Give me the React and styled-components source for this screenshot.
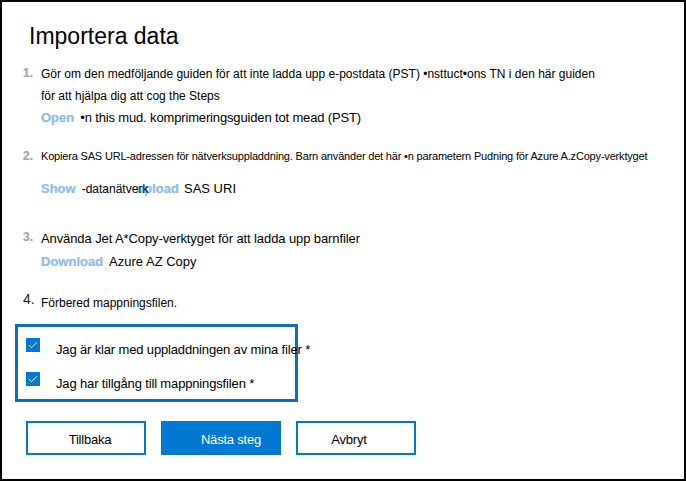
import React from "react";
import styled, { createGlobalStyle } from "styled-components";

const Global = createGlobalStyle`
  html, body { margin: 0; padding: 0; background: #fff; }
  body { font-family: "Liberation Sans", Arial, sans-serif; color: #111; }
`;

const Card = styled.div`
  box-sizing: border-box;
  width: 686px;
  height: 481px;
  border: 2px solid #000;
  padding: 20px 0 0 21px;
  background: #fff;
  overflow: hidden;
`;

const Title = styled.h1`
  margin: 0 0 0 6px;
  font-size: 23px;
  line-height: 28px;
  font-weight: 400;
  color: #000;
`;

const Step = styled.div`
  display: grid;
  grid-template-columns: 18px 1fr;
  margin-top: ${(p) => p.$mt}px;
`;

const Num = styled.span`
  font-size: ${(p) => (p.$dark ? 14 : 12)}px;
  line-height: 22px;
  font-weight: ${(p) => (p.$dark ? 400 : 700)};
  color: ${(p) => (p.$dark ? "#222" : "#a8a8a8")};
  text-shadow: ${(p) => (p.$dark ? "none" : "0 0 1px #c8c8c8")};
  margin-top: ${(p) => p.$up || 0}px;
`;

const Body = styled.div`
  display: flex;
  flex-direction: column;
`;

const Line = styled.div`
  font-size: ${(p) => p.$size || 12}px;
  line-height: ${(p) => p.$lh || 22}px;
  letter-spacing: ${(p) => p.$ls || 0}px;
  margin-top: ${(p) => p.$mt || 0}px;
  white-space: nowrap;
  color: #000;
`;

const Link = styled.span`
  color: #93bde6;
  font-weight: 700;
  font-size: 13px;
  letter-spacing: 0;
  text-shadow: 0 0 1px #b9d4ee;
  margin-right: ${(p) => p.$mr ?? 6}px;
  margin-left: ${(p) => p.$ml || 0}px;
`;

const Small = styled.span`
  font-size: ${(p) => p.$size}px;
  letter-spacing: ${(p) => p.$ls || 0}px;
  position: relative;
  z-index: 1;
`;

const CheckBox = styled.fieldset`
  box-sizing: border-box;
  margin: 10px 0 0 -8px;
  width: 283px;
  height: 78px;
  border: 3px solid #106ebe;
  padding: 11px 0 0 8px;
  display: flex;
  flex-direction: column;
  gap: 14px;
  min-width: 0;
`;

const CheckRow = styled.label`
  display: flex;
  align-items: flex-start;
  gap: 16px;
  height: 20px;
  white-space: nowrap;
`;

const Box = styled.span`
  flex: none;
  width: 14px;
  height: 14px;
  background: #0078d4;
  display: flex;
  align-items: center;
  justify-content: center;
`;

const Label = styled.span`
  font-size: 13px;
  letter-spacing: -0.15px;
  line-height: 20px;
  margin-top: 2px;
  color: #000;
  position: relative;
`;

const Buttons = styled.div`
  display: flex;
  gap: 15px;
  margin: 19px 0 0 3px;
`;

const Button = styled.button`
  box-sizing: border-box;
  width: 120px;
  height: 34px;
  border: ${(p) => (p.$primary ? "none" : "2px solid #0078d4")};
  background: ${(p) => (p.$primary ? "#0078d4" : "#fff")};
  color: ${(p) => (p.$primary ? "#fff" : "#000")};
  font-family: "Liberation Sans", Arial, sans-serif;
  font-size: 13px;
  letter-spacing: -0.2px;
  padding: 3px ${(p) => Math.max(-(p.$shift || 0), 0)}px 0
    ${(p) => Math.max(p.$shift || 0, 0)}px;
  text-align: center;
  cursor: pointer;
`;

const Check = () => (
  <svg width="10" height="8" viewBox="0 0 10 8">
    <path d="M1 4.2 L3.6 6.6 L9 1.2" fill="none" stroke="#fff" strokeWidth="0.9" />
  </svg>
);

export default function App() {
  return (
    <>
      <Global />
      <Card>
        <Title>Importera data</Title>

        <Step $mt={13}>
          <Num $up={-1}>1.</Num>
          <Body>
            <Line $size={12}>
              Gör om den medföljande guiden för att inte ladda upp e-postdata (PST) •nsttuct•ons TN i den här guiden
            </Line>
            <Line $size={12}>för att hjälpa dig att cog the Steps</Line>
            <Line $size={13} $ls={-0.15}>
              <Link>Open</Link>•n this mud. komprimeringsguiden tot mead (PST)
            </Line>
          </Body>
        </Step>

        <Step $mt={16}>
          <Num>2.</Num>
          <Body>
            <Line $size={11} $ls={-0.18}>
              Kopiera SAS URL-adressen för nätverksuppladdning. Barn använder det här •n parametern Pudning för Azure A.zCopy-verktyget
            </Line>
            <Line $size={13} $mt={11}>
              <Link>Show</Link>
              <Small $size={12}>-datanätverk</Small>
              <Link $ml={-12} $mr={5}>upload</Link>
              SAS URI
            </Line>
          </Body>
        </Step>

        <Step $mt={26}>
          <Num>3.</Num>
          <Body>
            <Line $size={13} $lh={25} $ls={-0.1}>
              Använda Jet A*Copy-verktyget för att ladda upp barnfiler
            </Line>
            <Line $size={13}>
              <Link>Download</Link>Azure AZ Copy
            </Line>
          </Body>
        </Step>

        <Step $mt={19}>
          <Num $dark $up={-4}>4.</Num>
          <Body>
            <Line $size={12}>Förbered mappningsfilen.</Line>
          </Body>
        </Step>

        <CheckBox>
          <CheckRow>
            <Box><Check /></Box>
            <Label>Jag är klar med uppladdningen av mina filer *</Label>
          </CheckRow>
          <CheckRow>
            <Box><Check /></Box>
            <Label>Jag har tillgång till mappningsfilen *</Label>
          </CheckRow>
        </CheckBox>

        <Buttons>
          <Button $shift={8}>Tillbaka</Button>
          <Button $primary $shift={20}>Nästa steg</Button>
          <Button $shift={-14}>Avbryt</Button>
        </Buttons>
      </Card>
    </>
  );
}
